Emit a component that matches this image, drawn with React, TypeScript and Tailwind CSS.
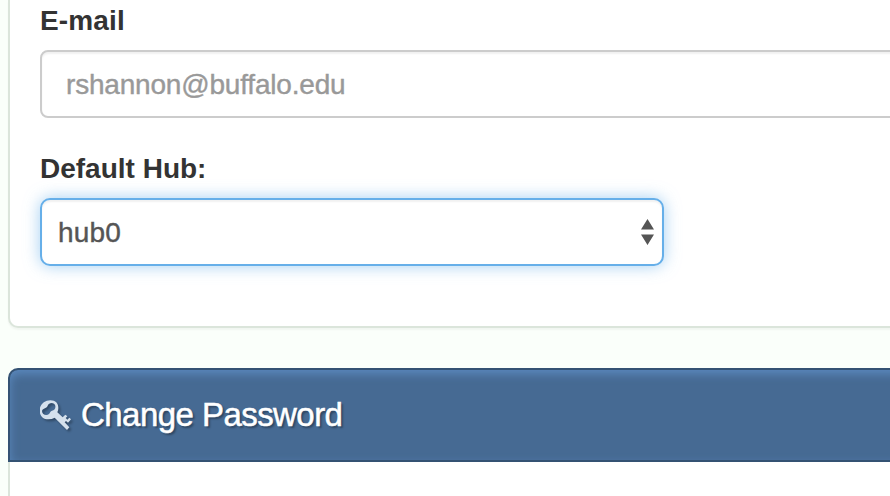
export default function App() {
  return (
    <div className="flex h-[496px] w-[890px] flex-col overflow-hidden bg-[#fafffa] pl-2 font-['Liberation_Sans',Arial,sans-serif]">
      <section className="flex h-[328px] w-[900px] flex-none flex-col rounded-bl-[10px] border-b-2 border-l-2 border-[#dbe5db] bg-white pl-[30px] shadow-[0_2px_2px_rgba(0,0,0,0.04)]">
        <label className="h-[50px] pt-[5px] text-[28px] leading-8 font-bold tracking-[0.15px] text-[#333]">
          E-mail
        </label>
        <div className="flex h-[68px] items-center rounded-l-lg border-2 border-[#ccc] bg-white pt-px pl-6 text-[28px] tracking-[-0.19px] text-[#999] shadow-[inset_0_2px_2px_rgba(0,0,0,0.06)] [-webkit-text-stroke:0.4px_#999]">
          <span>rshannon@buffalo.edu</span>
        </div>
        <label className="mt-[34px] h-[46px] pt-px text-[28px] leading-8 font-bold text-[#333]">
          Default Hub:
        </label>
        <div className="flex h-[68px] w-[624px] items-center justify-between rounded-[10px] border-2 border-[#66afe9] bg-white pr-2 pl-4 text-[28px] text-[#555] shadow-[inset_0_2px_2px_rgba(0,0,0,0.06),0_0_16px_rgba(102,175,233,0.6)]">
          <span className="pt-px tracking-[0.2px] [-webkit-text-stroke:0.4px_#555]">hub0</span>
          <svg width="13" height="26" viewBox="0 0 13 26" fill="#555">
            <path d="M6.5 0 13 10.5H0zM0 15.5h13L6.5 26z" />
          </svg>
        </div>
      </section>
      <section className="mt-10 flex w-[900px] flex-1 flex-col">
        <header className="flex h-[94px] flex-none items-center gap-[9px] rounded-tl-[10px] border-2 border-[#345273] bg-[#466a93] pl-[30px] text-white shadow-[inset_0_4px_10px_#5a88bd]">
          <svg
            width="32"
            height="32"
            viewBox="12 9 96 96"
            fill="#d5e1ed"
            className="drop-shadow-[2px_2px_1px_rgba(0,0,0,0.3)]"
          >
            <path
              fillRule="evenodd"
              d="M11 43C11 26 26 13 43 13C59 13 67 22 67 36Q67 43 64 49L80 64L88 56L94 61L89 66L94 71L100 65L105 70L96 80L90 75L86 79L100 94L93 102L56 65Q48 70 37 70C20 70 11 59 11 43ZM35 29C38 20 49 19 55 24C62 31 57 43 48 44C43 45 43 50 39 54C32 61 18 56 18 46C18 35 32 39 35 29Z"
            />
          </svg>
          <h2 className="text-[33px] tracking-[-0.55px] [-webkit-text-stroke:0.5px_white] [text-shadow:2px_2px_2px_rgba(0,0,0,0.35)]">
            Change Password
          </h2>
        </header>
        <div className="flex-1 border-l-2 border-[#dbe5db] bg-white" />
      </section>
    </div>
  );
}
